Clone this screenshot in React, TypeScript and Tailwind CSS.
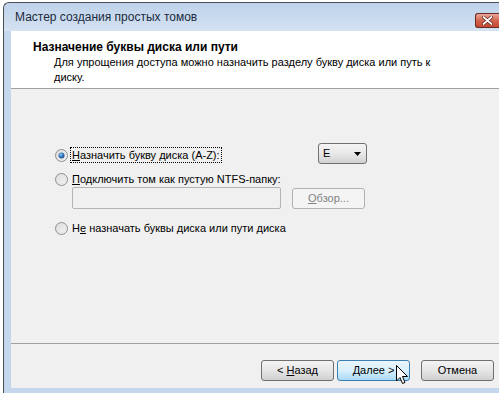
import React from 'react';

const FONT = '"Liberation Sans", "Noto Sans", sans-serif';

function Radio({ checked }: { checked?: boolean }) {
  return (
    <svg width="13" height="13" viewBox="0 0 13 13" className="shrink-0">
      <defs>
        <linearGradient id={checked ? 'rg1' : 'rg0'} x1="0" y1="0" x2="1" y2="1">
          <stop offset="0" stopColor="#d9d9d9" />
          <stop offset="1" stopColor="#f7f7f7" />
        </linearGradient>
        <radialGradient id="dot" cx="0.4" cy="0.35" r="0.7">
          <stop offset="0" stopColor="#8cc6f0" />
          <stop offset="0.6" stopColor="#2d6fb5" />
          <stop offset="1" stopColor="#1b4a85" />
        </radialGradient>
      </defs>
      <circle cx="6.5" cy="6.5" r="6" fill={`url(#${checked ? 'rg1' : 'rg0'})`} stroke="#8e8f8f" />
      <circle cx="6.5" cy="6.5" r="4.3" fill="none" stroke="#e6e6e6" strokeWidth="1" />
      {checked && <circle cx="6.5" cy="6.5" r="3" fill="url(#dot)" />}
    </svg>
  );
}

function Btn({ children, hot }: { children: React.ReactNode; hot?: boolean }) {
  return (
    <div
      className={
        hot
          ? 'w-[73px] h-[21px] flex items-center justify-center rounded-[3px] border border-[#3c7fb1] bg-gradient-to-b from-[#eaf6fd] via-[#d9f0fc] to-[#a7d9f5] text-[11px] text-black'
          : 'w-[73px] h-[21px] flex items-center justify-center rounded-[3px] border border-[#707070] bg-gradient-to-b from-[#f4f4f4] via-[#e6e6e6] to-[#d0d0d0] text-[11px] text-black'
      }
    >
      {children}
    </div>
  );
}

export default function App() {
  return (
    <div className="w-[499px] h-[393px] bg-white pt-[2px] pl-[3px] overflow-hidden" style={{ fontFamily: FONT }}>
      <div className="h-full flex flex-col border-l border-t border-[#4a4f57] rounded-tl-[6px] bg-[#c4d7ed]">
        {/* title bar */}
        <div className="relative h-[28px] shrink-0 flex items-center pl-[11px] bg-gradient-to-b from-[#bed2ea] to-[#d4e2f2] rounded-tl-[6px]">
          <span className="text-[12px] text-[#1b2a3d]">Мастер создания простых томов</span>
          <div className="absolute right-0 top-[10px] w-[24px] h-[15px] rounded-l-[3px] border border-[#6b2a22] border-r-0 bg-gradient-to-b from-[#e9a99b] via-[#d2634c] to-[#c24a33] flex items-center justify-center">
            <svg width="11" height="9" viewBox="0 0 11 9">
              <path d="M1.5 1 L9.5 8 M9.5 1 L1.5 8" stroke="#5a1a12" strokeWidth="3.2" strokeLinecap="round" />
              <path d="M1.5 1 L9.5 8 M9.5 1 L1.5 8" stroke="#ffffff" strokeWidth="1.8" strokeLinecap="round" />
            </svg>
          </div>
        </div>

        {/* client area */}
        <div className="flex-1 ml-[7px] mb-[5px] flex flex-col bg-[#f0f0f0] text-[11px] text-black">
          <div className="h-[58px] shrink-0 bg-white border-b border-[#a0a0a0] pl-[22px] pt-[8px]">
            <div className="font-bold text-[12px] leading-[16px]">Назначение буквы диска или пути</div>
            <div className="pl-[21px] leading-[15px] text-[11px]">
              Для упрощения доступа можно назначить разделу букву диска или путь к
              <br />
              диску.
            </div>
          </div>

          <div className="flex-1 flex flex-col pt-[54px]">
            <div className="flex h-[21px] pl-[44px]">
              <div className="w-[263px] flex items-center gap-[3px] mt-[4px] h-[16px]">
                <Radio checked />
                <span className="outline-1 outline-dotted outline-black leading-[14px] px-[1px]">
                  <u>Н</u>азначить букву диска (A-Z):
                </span>
              </div>
              <div className="w-[49px] h-[21px] rounded-[3px] border border-[#707070] bg-gradient-to-b from-[#f4f4f4] via-[#e8e8e8] to-[#d2d2d2] flex items-center pl-[4px] pr-[5px]">
                <span className="flex-1">E</span>
                <svg width="7" height="4" viewBox="0 0 7 4">
                  <path d="M0 0 H7 L3.5 4 Z" fill="#000" />
                </svg>
              </div>
            </div>

            <div className="flex items-center h-[16px] mt-[7px] pl-[44px] gap-[4px]">
              <Radio />
              <span>
                <u>П</u>одключить том как пустую NTFS-папку:
              </span>
            </div>

            <div className="flex items-start pl-[61px] gap-[11px]">
              <div className="w-[209px] h-[22px] border border-[#b5b5b5] rounded-[2px] bg-[#f0f0f0]" />
              <div className="w-[73px] h-[21px] mt-[1px] rounded-[3px] border border-[#adb2b5] bg-[#f4f4f4] flex items-center justify-center text-[#838383]">
                <span>
                  <u>О</u>бзор...
                </span>
              </div>
            </div>

            <div className="flex items-center h-[16px] mt-[11px] pl-[44px] gap-[4px]">
              <Radio />
              <span>
                Н<u>е</u> назначать буквы диска или пути диска
              </span>
            </div>

            <div className="flex-1" />
            <div className="h-px bg-[#a0a0a0]" />
            <div className="relative flex justify-end items-start h-[44px] pt-[16px] pr-[5px]">
              <Btn>
                &lt; <u className="ml-[3px]">Н</u>азад
              </Btn>
              <div className="ml-[3px]">
                <Btn hot>
                  <u>Д</u>алее &gt;
                </Btn>
              </div>
              <div className="ml-[11px]">
                <Btn>Отмена</Btn>
              </div>
              <svg className="absolute left-[385px] top-[21px]" width="13" height="20" viewBox="0 0 13 20">
                <path d="M0.5 0.5 V16 L4 12.5 L6.5 18.5 L9 17.5 L6.5 11.5 H11.5 Z" fill="#fff" stroke="#000" strokeWidth="1" strokeLinejoin="miter" />
              </svg>
            </div>
          </div>
        </div>
      </div>
    </div>
  );
}
